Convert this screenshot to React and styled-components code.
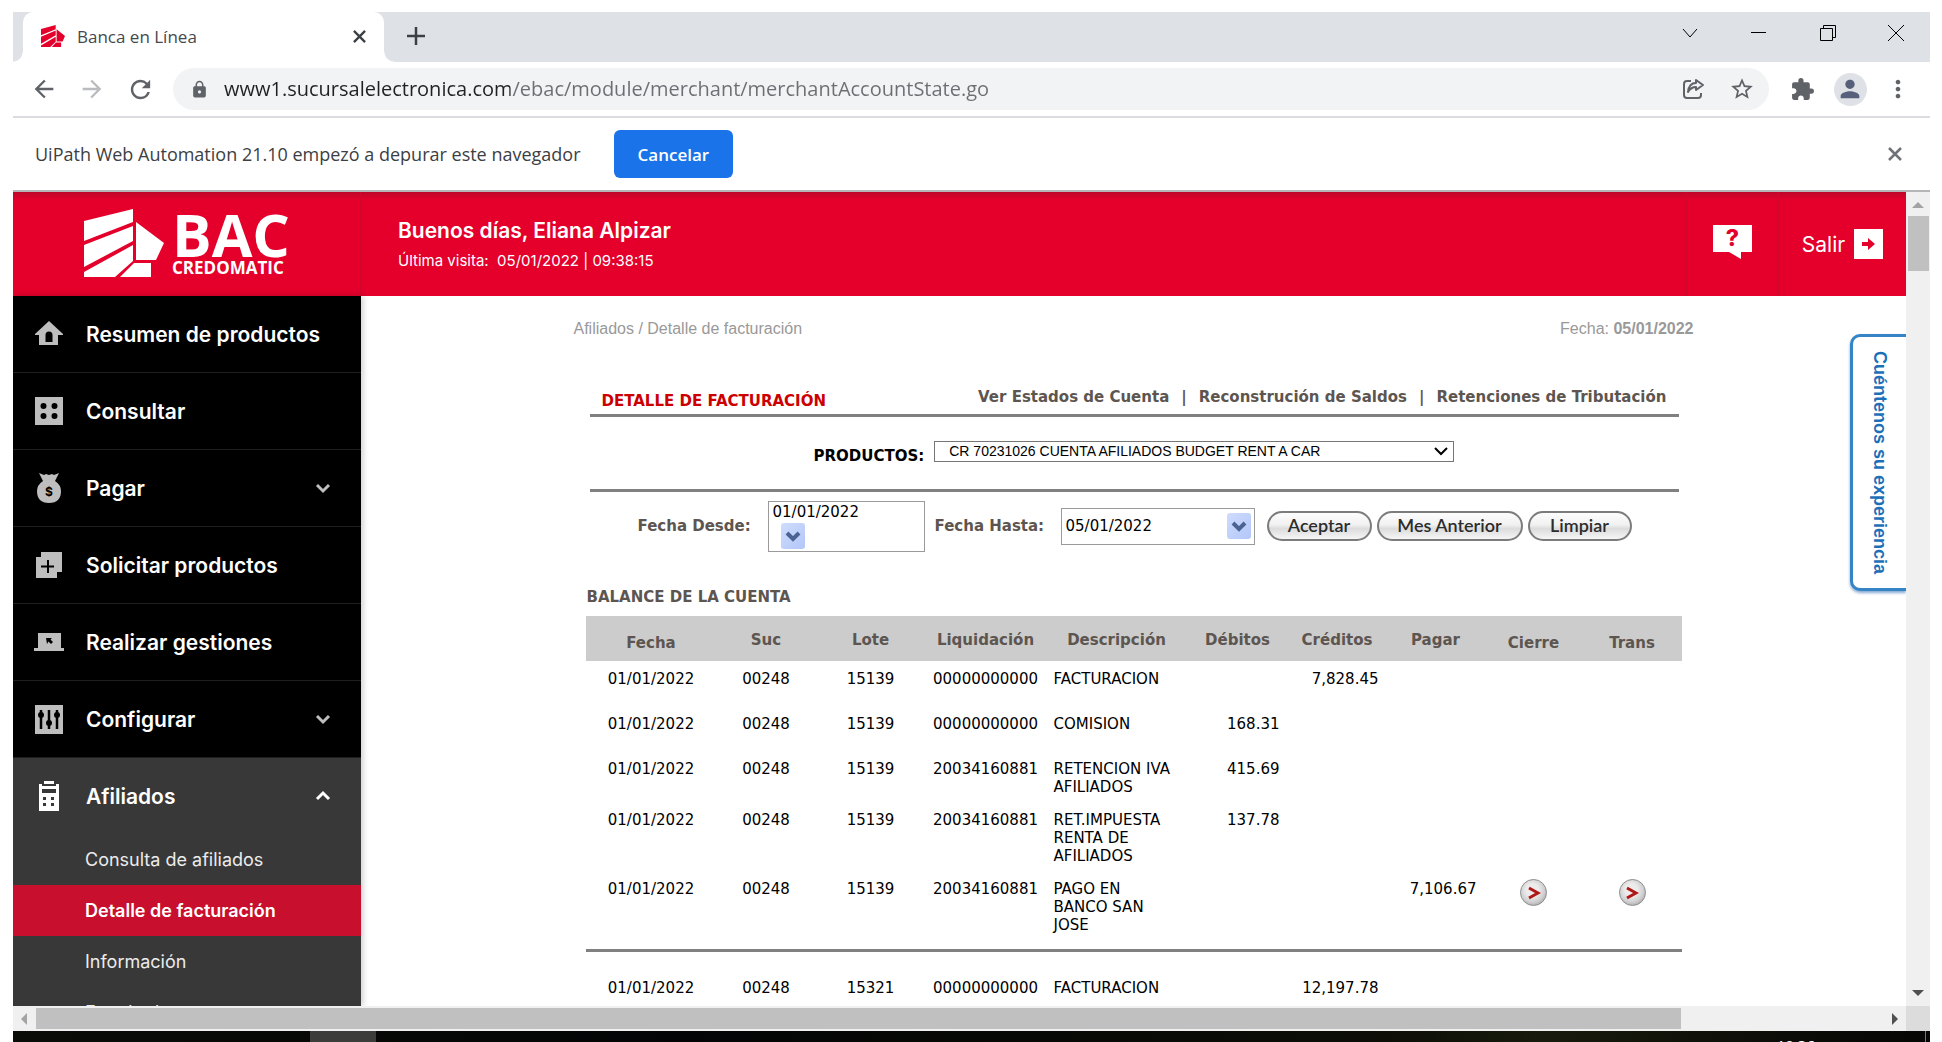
import React from "react";
import styled, { createGlobalStyle, css } from "styled-components";
import {
  MdArrowBack,
  MdArrowForward,
  MdRefresh,
  MdLock,
  MdStarBorder,
  MdExtension,
  MdPerson,
  MdMoreVert,
} from "react-icons/md";

const chromeFont = '"Open Sans", "Noto Sans", sans-serif';
const brandFont = 'Inter, "Open Sans", sans-serif';
const tableFont = '"DejaVu Sans", sans-serif';
const plainFont = '"Liberation Sans", Arial, sans-serif';

const GlobalStyle = createGlobalStyle`
  *, *::before, *::after { box-sizing: border-box; }
  body { margin: 0; background: #fff; }
  button, input, select { font: inherit; color: inherit; margin: 0; }
  button { border: 0; padding: 0; background: none; cursor: pointer; }
  a { color: inherit; text-decoration: none; }
  svg { display: block; flex: none; }
`;

const Screen = styled.div`
  display: flex;
  flex-direction: column;
  height: 100vh;
  padding: 12px 12px 0 13px;
  overflow: hidden;
`;

/* ---------- browser chrome ---------- */

const TabStrip = styled.div`
  display: flex;
  align-items: stretch;
  height: 50px;
  flex: none;
  padding-left: 10px;
  background: #dee1e6;
  font-family: ${chromeFont};
`;

const Tab = styled.div`
  position: relative;
  display: flex;
  align-items: center;
  gap: 12px;
  width: 361px;
  padding: 0 14px 2px 18px;
  border-radius: 10px 10px 0 0;
  background: #fff;
  color: #45494d;
  font-size: 17px;
  &::before,
  &::after {
    content: "";
    position: absolute;
    bottom: 0;
    width: 10px;
    height: 10px;
  }
  &::before {
    right: 100%;
    background: radial-gradient(circle at 0 0, transparent 9px, #fff 10px);
  }
  &::after {
    left: 100%;
    background: radial-gradient(circle at 100% 0, transparent 9px, #fff 10px);
  }
`;

const TabTitle = styled.span`
  flex: 1;
`;

const IconButton = styled.button`
  display: grid;
  place-items: center;
  width: ${(p) => p.$w || 48}px;
  height: ${(p) => p.$h || 42}px;
  flex: none;
  color: ${(p) => p.$color || "#5f6368"};
`;

const WindowControls = styled.div`
  display: flex;
  align-items: center;
  height: 42px;
  margin-left: auto;
  color: #000;
`;

const Toolbar = styled.div`
  display: flex;
  align-items: center;
  height: 56px;
  flex: none;
  padding: 0 8px 0 7px;
  border-bottom: 2px solid #dadcdf;
  font-family: ${chromeFont};
`;

const Omnibox = styled.div`
  display: flex;
  align-items: center;
  flex: 1;
  height: 42px;
  margin: 0 9px 0 9px;
  padding: 0 3px 0 17px;
  border-radius: 21px;
  background: #f1f3f4;
  color: #5f6368;
`;

const UrlInput = styled.input`
  flex: 1;
  min-width: 0;
  margin-left: 15px;
  padding: 0;
  border: 0;
  outline: 0;
  font-size: 20px;
  line-height: 30px;
  color: #6b6f73;
  background: linear-gradient(to right, #202124 286px, #6b6f73 286px);
  background-clip: text;
  -webkit-background-clip: text;
  -webkit-text-fill-color: transparent;
`;

const Avatar = styled.span`
  display: grid;
  place-items: center;
  width: 33px;
  height: 33px;
  border-radius: 50%;
  background: #dee1e6;
  color: #56607a;
`;

const InfoBar = styled.div`
  display: flex;
  align-items: center;
  height: 74px;
  flex: none;
  padding: 0 11px 0 22px;
  border-bottom: 2px solid #b4b6b8;
  color: #3c4043;
  font-family: ${chromeFont};
  font-size: 18px;
`;

const CancelButton = styled.button`
  height: 48px;
  margin-left: 33px;
  margin-right: auto;
  padding: 0 24px;
  border-radius: 6px;
  background: #1a73e8;
  color: #fff;
  font-size: 17px;
  font-weight: 600;
`;

/* ---------- page viewport ---------- */

const Viewport = styled.div`
  display: grid;
  grid-template-columns: 1fr 24px;
  grid-template-rows: 1fr 25px;
  flex: 1;
  min-height: 0;
`;

const Page = styled.div`
  position: relative;
  display: flex;
  flex-direction: column;
  min-height: 0;
  overflow: hidden;
`;

const Scrollbar = styled.div`
  display: flex;
  flex-direction: ${(p) => (p.$vertical ? "column" : "row")};
  align-items: center;
  justify-content: space-between;
  background: #f0f0f0;
  ${(p) => (p.$vertical ? "padding: 10px 0" : "padding: 0 8px")};
`;

const Thumb = styled.div`
  background: #c0c0c0;
  ${(p) =>
    p.$vertical
      ? css`
          width: 21px;
          height: 55px;
          margin: 8px 0 auto 1px;
        `
      : css`
          height: 21px;
          width: calc(88% - 7px);
          margin: 0 auto 0 9px;
        `};
`;

const Arrow = styled.svg`
  width: ${(p) => (p.$wide ? 12 : 6)}px;
  height: ${(p) => (p.$wide ? 6 : 12)}px;
  fill: ${(p) => (p.$dim ? "#a3a3a3" : "#505050")};
`;

const Corner = styled.div`
  background: #dcdcdc;
`;

const Header = styled.header`
  display: flex;
  align-items: stretch;
  height: 104px;
  flex: none;
  background: linear-gradient(rgba(110, 20, 40, 0.35), rgba(110, 20, 40, 0) 8px), #e4002b;
  color: #fff;
  font-family: ${brandFont};
`;

const LogoLink = styled.a`
  display: flex;
  align-items: center;
  gap: 8px;
  width: 348px;
  padding-left: 71px;
  padding-bottom: 2px;
  border-right: 1px solid #d0062c;
`;

const LogoWords = styled.span`
  display: flex;
  flex-direction: column;
  font-family: "Open Sans", sans-serif;
  font-weight: 700;
`;

const LogoBig = styled.span`
  font-size: 59px;
  line-height: 50px;
`;

const LogoSmall = styled.span`
  font-size: 17px;
  line-height: 18px;
`;

const Greeting = styled.div`
  flex: 1;
  padding: 26px 0 0 37px;
`;

const Hello = styled.p`
  margin: 0 0 7px;
  font-size: 21px;
  font-weight: 600;
  line-height: 26px;
`;

const LastVisit = styled.p`
  margin: 0;
  font-size: 15px;
  line-height: 20px;
  white-space: pre;
`;

const HeaderCell = styled.a`
  display: flex;
  align-items: center;
  justify-content: center;
  gap: 9px;
  width: ${(p) => p.$w}px;
  border-left: 1px solid #d0062c;
  font-size: 21px;
`;

const HelpBubble = styled.span`
  position: relative;
  display: grid;
  place-items: center;
  width: 39px;
  height: 27px;
  margin-bottom: 12px;
  background: #fff;
  color: #e4002b;
  font-size: 23px;
  font-weight: 800;
  line-height: 27px;
  &::after {
    content: "";
    position: absolute;
    top: 100%;
    left: 16px;
    border-top: 7px solid #fff;
    border-left: 12px solid transparent;
  }
`;

const ExitBox = styled.span`
  display: grid;
  place-items: center;
  width: 29px;
  height: 30px;
  background: #fff;
  color: #e4002b;
`;

const Body = styled.div`
  display: flex;
  flex: 1;
  min-height: 0;
`;

/* ---------- sidebar ---------- */

const Sidebar = styled.nav`
  width: 348px;
  flex: none;
  overflow: hidden;
  background: #383838;
  box-shadow: 2px 0 6px rgba(0, 0, 0, 0.2);
  font-family: ${brandFont};
`;

const MenuItem = styled.a`
  display: flex;
  align-items: center;
  height: ${(p) => (p.$open ? 76 : 77)}px;
  padding: 0 30px 0 21px;
  border-bottom: ${(p) => (p.$open ? "0" : "1px solid #1f1f1f")};
  background: ${(p) => (p.$open ? "#383838" : "#000")};
  color: ${(p) => (p.$open ? "#fff" : "#bebebe")};
`;

const MenuLabel = styled.span`
  flex: 1;
  margin-left: 22px;
  color: #fff;
  font-size: 21px;
  font-weight: 600;
`;

const SubItem = styled.a`
  display: flex;
  align-items: center;
  height: 51px;
  padding-left: 72px;
  background: ${(p) => (p.$active ? "#c8102e" : "transparent")};
  color: ${(p) => (p.$active ? "#fff" : "#ececec")};
  font-size: 18px;
  font-weight: ${(p) => (p.$active ? 600 : 400)};
`;

/* ---------- main content ---------- */

const Main = styled.main`
  flex: 1;
  min-width: 0;
  overflow: hidden;
`;

const Content = styled.div`
  max-width: 1120px;
  margin: 0 auto;
  font-family: ${tableFont};
  font-size: 15px;
`;

const Crumbs = styled.div`
  display: flex;
  justify-content: space-between;
  padding-top: 23px;
  color: #999;
  font-family: ${plainFont};
  font-size: 16px;
  line-height: 20px;
`;

const Panel = styled.section`
  padding: 0 15px 0 16px;
  color: #5d5550;
`;

const TitleRow = styled.div`
  display: flex;
  justify-content: space-between;
  padding: 48px 12px 3px 12px;
  line-height: 20px;
`;

const Title = styled.h1`
  margin: 4px 0 0;
  color: #c00;
  font-size: 15px;
  font-weight: 700;
`;

const Links = styled.div`
  display: flex;
  gap: 12px;
  font-weight: 700;
`;

const Rule = styled.hr`
  height: 3px;
  margin: 0;
  border: 0;
  background: #808080;
`;

const ProductRow = styled.div`
  display: flex;
  align-items: center;
  height: 72px;
  padding: 0 225px 0 224px;
  gap: 10px;
`;

const ProductLabel = styled.label`
  padding-top: 5px;
  color: #000;
  font-weight: 700;
`;

const ProductSelect = styled.div`
  position: relative;
  flex: 1;
  margin-bottom: 3px;
  select {
    display: block;
    width: 100%;
    height: 21px;
    padding: 0 24px 2px 14px;
    border: 1px solid #767676;
    border-radius: 0;
    background: #fff;
    color: #000;
    font-family: ${plainFont};
    font-size: 14px;
    appearance: none;
  }
  svg {
    position: absolute;
    top: 6px;
    right: 6px;
    pointer-events: none;
  }
`;

const FilterRow = styled.form`
  display: flex;
  align-items: center;
  height: 68px;
  padding-left: 48px;
  font-weight: 700;
`;

const DateLabel = styled.label`
  width: ${(p) => p.$w}px;
`;

const DateBox = styled.span`
  display: flex;
  flex-wrap: ${(p) => (p.$stacked ? "wrap" : "nowrap")};
  align-items: center;
  width: ${(p) => p.$w}px;
  height: ${(p) => (p.$stacked ? 51 : 37)}px;
  margin-right: 10px;
  padding: 0 2px 1px 4px;
  border: 1px solid #9a9a9a;
  background: #fff;
  color: #000;
  font-weight: 400;
  input {
    width: ${(p) => (p.$stacked ? 145 : 161)}px;
    height: 20px;
    padding: 0;
    border: 0;
    background: none;
  }
  button {
    display: grid;
    place-items: center;
    width: 24px;
    height: 26px;
    margin-left: ${(p) => (p.$stacked ? 8 : 0)}px;
    border-radius: 3px;
    background: linear-gradient(135deg, #cfdcfd, #b2c6f8);
  }
`;

const Actions = styled.div`
  display: flex;
  gap: 5px;
  margin-left: 2px;
`;

const PillButton = styled.button`
  height: 30px;
  width: ${(p) => p.$w}px;
  padding-bottom: 2px;
  border: 2px solid #7c7c7c;
  border-radius: 15px;
  background: linear-gradient(#fdfdfd 0%, #f1f1f1 45%, #dcdcdc 60%, #f6f6f6 100%);
  color: #2c2c2c;
  font-family: Lato, "Open Sans", sans-serif;
  font-size: 18px;
  font-weight: 600;
  line-height: 24px;
`;

const Caption = styled.h2`
  margin: 0 -3px 0 -3px;
  padding: 27px 0 9px;
  font-size: 15px;
  line-height: 20px;
`;

const Ledger = styled.table`
  width: calc(100% + 7px);
  margin: 0 -3px 0 -4px;
  border-collapse: collapse;
  table-layout: fixed;
  color: #000;
  line-height: 18px;
  th {
    height: 45px;
    padding: 3px 0 0;
    background: #ccc;
    color: #5d5550;
    font-weight: 700;
  }
  th.low {
    padding-top: 9px;
  }
  td {
    height: 45px;
    padding: 9px 0 6px;
    vertical-align: top;
    text-align: center;
  }
  td.desc {
    padding-left: 8px;
    padding-right: 14px;
    text-align: left;
  }
  td.num {
    padding-right: 8px;
    text-align: right;
  }
  td.go {
    padding-top: 8px;
  }
  td.rule {
    height: 30px;
    padding: 9px 0 18px;
  }
`;

const GoButton = styled.button`
  display: grid;
  place-items: center;
  width: 27px;
  height: 27px;
  margin: 0 auto;
  border: 1px solid #8f8f8f;
  border-radius: 50%;
  background: radial-gradient(circle at 45% 40%, #ececec 30%, #cfcfcf 60%, #858585 100%);
`;

const FeedbackTab = styled.a`
  position: absolute;
  top: 142px;
  right: 0;
  display: flex;
  align-items: center;
  justify-content: center;
  width: 56px;
  height: 257px;
  border: 3px solid #3585c6;
  border-right: 0;
  border-radius: 10px 0 0 10px;
  background: #fff;
  box-shadow: 0 2px 3px rgba(53, 110, 180, 0.6);
  color: #1d70b8;
  font-family: ${plainFont};
  font-size: 18px;
  font-weight: 700;
  line-height: 20px;
  writing-mode: vertical-rl;
`;

/* ---------- desktop strip under the window ---------- */

const Desktop = styled.div`
  display: flex;
  align-items: flex-start;
  height: 11px;
  flex: none;
  overflow: hidden;
  padding-left: 297px;
  background: linear-gradient(to right, #0a0c08 0, #030405 35%, #0b0d06 70%, #171a0c 80%, #050505 100%);
`;

const TaskButton = styled.div`
  width: 66px;
  height: 11px;
  margin-right: auto;
  background: #3c3c3a;
`;

const Clock = styled.time`
  margin-right: 110px;
  padding-top: 4px;
  color: #fff;
  font-family: ${chromeFont};
  font-size: 15px;
  line-height: 20px;
`;

const ShowDesktop = styled.div`
  width: 5px;
  height: 11px;
  border-left: 1px solid #777;
`;

/* ---------- icons ---------- */

const BacMark = ({ w, h }) => (
  <svg width={w} height={h} viewBox="0 0 80 68" fill="currentColor">
    <path d="M0 12 L49 0 V13 L0 32 Z" />
    <path d="M0 36 L49 17 V32 L0 58 Z" />
    <path d="M0 63 L49 36 V52 L31 68 H0 Z" />
    <path d="M52 13 L80 34 L72 51 H52 Z" />
    <path d="M50 54 H67 V68 H36 Z" />
  </svg>
);

const Cross = ({ size }) => (
  <svg width={size} height={size} viewBox="0 0 14 14" fill="none" stroke="currentColor" strokeWidth="2.500">
    <path d="M1 1 L13 13 M13 1 L1 13" />
  </svg>
);

const Plus = () => (
  <svg width="18" height="18" viewBox="0 0 18 18" fill="none" stroke="currentColor" strokeWidth="2.500">
    <path d="M9 0 V18 M0 9 H18" />
  </svg>
);

const Chevron = ({ up, size = 16, width = 3, color = "currentColor" }) => (
  <svg width={size} height={size} viewBox="0 0 16 16" fill="none" stroke={color} strokeWidth={width}>
    <path d={up ? "M2 11 L8 5 L14 11" : "M2 5 L8 11 L14 5"} />
  </svg>
);

const menuIcons = {
  home: (
    <path
      fillRule="evenodd"
      d="M15 2 L29 15 V16 H24 V26 H5 V16 H1 V15 Z M11.500 23 V16 Q11.500 12.500 15 12.500 Q18.500 12.500 18.500 16 V23 Z"
    />
  ),
  dice: (
    <path
      fillRule="evenodd"
      d="M1 1 H29 V29 H1 Z M6.500 10 a3 3 0 1 0 6 0 a3 3 0 1 0 -6 0 M17.500 10 a3 3 0 1 0 6 0 a3 3 0 1 0 -6 0 M6.500 20 a3 3 0 1 0 6 0 a3 3 0 1 0 -6 0 M17.500 20 a3 3 0 1 0 6 0 a3 3 0 1 0 -6 0"
    />
  ),
  bag: (
    <>
      <path d="M5 0 L10 2 L12 1 L15 2 L18 1 L20 2 L25 0 L21 8 Q27 12 27 18 Q27 30 15 30 Q3 30 3 18 Q3 12 9 8 Z" />
      <text x="15" y="23" textAnchor="middle" fontSize="12" fontWeight="700" fontFamily="Inter, sans-serif" fill="#000">
        $
      </text>
    </>
  ),
  plus: (
    <>
      <path d="M7 2 H28 V22 H23 V28 H2 V7 H7 Z" />
      <path d="M14 10 V23 M7 16.500 H20" stroke="#000" strokeWidth="2" />
    </>
  ),
  laptop: (
    <>
      <path d="M4 6 H27 V21 H30 V24 H0 V21 H4 Z" />
      <path d="M12 11 H18 L16.500 12.500 L19 15 L17 17 L14.500 14.500 L13 17 Z" fill="#000" />
    </>
  ),
  sliders: (
    <>
      <path d="M1 1 H29 V30 H1 Z" />
      <path d="M7 6 V25 M15 6 V25 M23 6 V25" stroke="#000" strokeWidth="2.500" />
      <circle cx="7" cy="11" r="3" fill="#000" />
      <circle cx="15" cy="19" r="3" fill="#000" />
      <circle cx="23" cy="11" r="3" fill="#000" />
    </>
  ),
  terminal: (
    <>
      <path d="M10 0 H20 V3 H10 Z M5 3 H8 V5 H22 V3 H25 V30 H5 Z" />
      <path
        d="M8 8 H22 V12 H8 Z M9 16 h3 v3 h-3 z M17 16 h3 v3 h-3 z M9 22 h3 v3 h-3 z M17 22 h3 v3 h-3 z"
        fill="#383838"
      />
    </>
  ),
};

const MenuIcon = ({ name }) => (
  <svg width="30" height="30" viewBox="0 0 30 30" fill="currentColor">
    {menuIcons[name]}
  </svg>
);

/* ---------- data ---------- */

const menu = [
  { icon: "home", label: "Resumen de productos" },
  { icon: "dice", label: "Consultar" },
  { icon: "bag", label: "Pagar", arrow: true },
  { icon: "plus", label: "Solicitar productos" },
  { icon: "laptop", label: "Realizar gestiones" },
  { icon: "sliders", label: "Configurar", arrow: true },
  { icon: "terminal", label: "Afiliados", arrow: true, open: true },
];

const submenu = ["Consulta de afiliados", "Detalle de facturación", "Información", "Estado de cuenta"];

const columns = [
  { label: "Fecha", width: 131, low: true },
  { label: "Suc", width: 99 },
  { label: "Lote", width: 110 },
  { label: "Liquidación", width: 120 },
  { label: "Descripción", width: 142 },
  { label: "Débitos", width: 100 },
  { label: "Créditos", width: 99 },
  { label: "Pagar", width: 98 },
  { label: "Cierre", width: 98, low: true },
  { label: "Trans", width: 99, low: true },
];

const rows = [
  ["01/01/2022", "00248", "15139", "00000000000", "FACTURACION", "", "7,828.45", ""],
  ["01/01/2022", "00248", "15139", "00000000000", "COMISION", "168.31", "", ""],
  ["01/01/2022", "00248", "15139", "20034160881", "RETENCION IVA AFILIADOS", "415.69", "", ""],
  ["01/01/2022", "00248", "15139", "20034160881", "RET.IMPUESTA RENTA DE AFILIADOS", "137.78", "", ""],
  ["01/01/2022", "00248", "15139", "20034160881", "PAGO EN BANCO SAN JOSE", "", "", "7,106.67"],
  null,
  ["01/01/2022", "00248", "15321", "00000000000", "FACTURACION", "", "12,197.78", ""],
];

const cellClass = (i) => (i === 4 ? "desc" : i > 4 ? "num" : undefined);

const Go = ({ label }) => (
  <GoButton type="button" aria-label={label}>
    <svg width="14" height="14" viewBox="0 0 14 14" fill="none" stroke="#b01818" strokeWidth="3">
      <path d="M2 2 L11 7 L2 12" />
    </svg>
  </GoButton>
);

function LedgerRow({ row }) {
  if (!row) {
    return (
      <tr>
        <td className="rule" colSpan={10}>
          <Rule />
        </td>
      </tr>
    );
  }
  return (
    <tr>
      {row.map((value, i) => (
        <td key={i} className={cellClass(i)}>
          {value}
        </td>
      ))}
      <td className="go">{row[7] && <Go label="Cierre" />}</td>
      <td className="go">{row[7] && <Go label="Trans" />}</td>
    </tr>
  );
}

function BrowserChrome() {
  return (
    <>
      <TabStrip>
        <Tab>
          <svg width="24" height="22" viewBox="0 0 80 68" preserveAspectRatio="none" fill="#e4002b">
            <path d="M0 12 L49 0 V13 L0 32 Z M0 36 L49 17 V32 L0 58 Z M0 63 L49 36 V52 L31 68 H0 Z M52 13 L80 34 L72 51 H52 Z M50 54 H67 V68 H36 Z" />
          </svg>
          <TabTitle>Banca en Línea</TabTitle>
          <IconButton $w={22} aria-label="Cerrar pestaña" $color="#3c4043">
            <Cross size={13} />
          </IconButton>
        </Tab>
        <IconButton $w={64} $h={48} $color="#3c4043" aria-label="Nueva pestaña">
          <Plus />
        </IconButton>
        <WindowControls>
          <IconButton $w={68} $color="#000" aria-label="Buscar pestañas">
            <svg width="16" height="16" viewBox="0 0 16 16" fill="none" stroke="#000">
              <path d="M1 4 L8 12 L15 4" />
            </svg>
          </IconButton>
          <IconButton $w={69} $color="#000" aria-label="Minimizar">
            <svg width="16" height="16" viewBox="0 0 16 16">
              <path d="M0 7 H15 V8 H0 Z" />
            </svg>
          </IconButton>
          <IconButton $w={69} $color="#000" aria-label="Restaurar">
            <svg width="16" height="16" viewBox="0 0 16 16" fill="none" stroke="#000">
              <path d="M0.500 3.500 H12.500 V15.500 H0.500 Z M3.500 3.500 V0.500 H15.500 V12.500 H12.500" />
            </svg>
          </IconButton>
          <IconButton $w={68} $color="#000" aria-label="Cerrar">
            <svg width="16" height="16" viewBox="0 0 16 16" fill="none" stroke="#000">
              <path d="M0 0 L16 16 M16 0 L0 16" />
            </svg>
          </IconButton>
        </WindowControls>
      </TabStrip>
      <Toolbar>
        <IconButton aria-label="Atrás">
          <MdArrowBack size={28} />
        </IconButton>
        <IconButton aria-label="Adelante" $color="#b9bbbe">
          <MdArrowForward size={28} />
        </IconButton>
        <IconButton aria-label="Recargar">
          <MdRefresh size={29} />
        </IconButton>
        <Omnibox>
          <MdLock size={19} />
          <UrlInput
            aria-label="Dirección"
            defaultValue="www1.sucursalelectronica.com/ebac/module/merchant/merchantAccountState.go"
          />
          <IconButton aria-label="Compartir">
            <svg width="22" height="22" viewBox="0 0 22 22" fill="none" stroke="#5f6368" strokeWidth="2" strokeLinejoin="round">
              <path d="M8 3 H4 Q1 3 1 6 V17 Q1 20 4 20 H15 Q18 20 18 17 V15" />
              <path d="M13 2 L20 7 L13 12 V9 Q8 9 5 14 Q6 5 13 5 Z" />
            </svg>
          </IconButton>
          <IconButton aria-label="Marcador">
            <MdStarBorder size={26} />
          </IconButton>
        </Omnibox>
        <IconButton aria-label="Extensiones">
          <MdExtension size={25} />
        </IconButton>
        <IconButton aria-label="Perfil">
          <Avatar>
            <MdPerson size={28} />
          </Avatar>
        </IconButton>
        <IconButton aria-label="Menú">
          <MdMoreVert size={28} />
        </IconButton>
      </Toolbar>
      <InfoBar>
        <span>UiPath Web Automation 21.10 empezó a depurar este navegador</span>
        <CancelButton>Cancelar</CancelButton>
        <IconButton aria-label="Cerrar aviso" $color="#6f7377">
          <Cross size={14} />
        </IconButton>
      </InfoBar>
    </>
  );
}

export default function App() {
  return (
    <Screen>
      <GlobalStyle />
      <BrowserChrome />
      <Viewport>
        <Page>
          <Header>
            <LogoLink href="#" aria-label="BAC Credomatic">
              <BacMark w={80} h={68} />
              <LogoWords>
                <LogoBig>BAC</LogoBig>
                <LogoSmall>CREDOMATIC</LogoSmall>
              </LogoWords>
            </LogoLink>
            <Greeting>
              <Hello>Buenos días, Eliana Alpizar</Hello>
              <LastVisit>{"Última visita:  05/01/2022 | 09:38:15"}</LastVisit>
            </Greeting>
            <HeaderCell href="#" $w={92} aria-label="Ayuda">
              <HelpBubble>?</HelpBubble>
            </HeaderCell>
            <HeaderCell href="#" $w={128}>
              Salir
              <ExitBox>
                <svg width="13" height="12" viewBox="0 0 13 12" fill="currentColor">
                  <path d="M0 4 H6 V0 L13 6 L6 12 V8 H0 Z" />
                </svg>
              </ExitBox>
            </HeaderCell>
          </Header>
          <Body>
            <Sidebar>
              {menu.map((m) => (
                <MenuItem key={m.label} href="#" $open={m.open}>
                  <MenuIcon name={m.icon} />
                  <MenuLabel>{m.label}</MenuLabel>
                  {m.arrow && <Chevron up={m.open} />}
                </MenuItem>
              ))}
              {submenu.map((s) => (
                <SubItem key={s} href="#" $active={s === "Detalle de facturación"}>
                  {s}
                </SubItem>
              ))}
            </Sidebar>
            <Main>
              <Content>
                <Crumbs>
                  <span>Afiliados / Detalle de facturación</span>
                  <span>
                    Fecha: <b>05/01/2022</b>
                  </span>
                </Crumbs>
                <Panel>
                  <TitleRow>
                    <Title>DETALLE DE FACTURACIÓN</Title>
                    <Links>
                      <a href="#">Ver Estados de Cuenta</a>
                      <span>|</span>
                      <a href="#">Reconstrución de Saldos</a>
                      <span>|</span>
                      <a href="#">Retenciones de Tributación</a>
                    </Links>
                  </TitleRow>
                  <Rule />
                  <ProductRow>
                    <ProductLabel htmlFor="producto">PRODUCTOS:</ProductLabel>
                    <ProductSelect>
                      <select id="producto">
                        <option>CR 70231026 CUENTA AFILIADOS BUDGET RENT A CAR</option>
                      </select>
                      <svg width="14" height="9" viewBox="0 0 14 9" fill="none" stroke="#000" strokeWidth="2">
                        <path d="M1 1 L7 7 L13 1" />
                      </svg>
                    </ProductSelect>
                  </ProductRow>
                  <Rule />
                  <FilterRow>
                    <DateLabel htmlFor="desde" $w={130}>
                      Fecha Desde:
                    </DateLabel>
                    <DateBox $stacked $w={157}>
                      <input id="desde" defaultValue="01/01/2022" />
                      <button type="button" aria-label="Elegir fecha desde">
                        <Chevron width={4} color="#4b6393" />
                      </button>
                    </DateBox>
                    <DateLabel htmlFor="hasta" $w={126}>
                      Fecha Hasta:
                    </DateLabel>
                    <DateBox $w={194}>
                      <input id="hasta" defaultValue="05/01/2022" />
                      <button type="button" aria-label="Elegir fecha hasta">
                        <Chevron width={4} color="#4b6393" />
                      </button>
                    </DateBox>
                    <Actions>
                      <PillButton type="button" $w={105}>
                        Aceptar
                      </PillButton>
                      <PillButton type="button" $w={146}>
                        Mes Anterior
                      </PillButton>
                      <PillButton type="button" $w={104}>
                        Limpiar
                      </PillButton>
                    </Actions>
                  </FilterRow>
                  <Caption>BALANCE DE LA CUENTA</Caption>
                  <Ledger>
                    <colgroup>
                      {columns.map((c) => (
                        <col key={c.label} width={c.width} />
                      ))}
                    </colgroup>
                    <thead>
                      <tr>
                        {columns.map((c) => (
                          <th key={c.label} className={c.low ? "low" : undefined}>
                            {c.label}
                          </th>
                        ))}
                      </tr>
                    </thead>
                    <tbody>
                      {rows.map((r, i) => (
                        <LedgerRow key={i} row={r} />
                      ))}
                    </tbody>
                  </Ledger>
                </Panel>
              </Content>
            </Main>
          </Body>
          <FeedbackTab href="#">Cuéntenos su experiencia</FeedbackTab>
        </Page>
        <Scrollbar $vertical>
          <Arrow $wide $dim viewBox="0 0 12 6">
            <path d="M0 6 L6 0 L12 6 Z" />
          </Arrow>
          <Thumb $vertical />
          <Arrow $wide viewBox="0 0 12 6">
            <path d="M0 0 H12 L6 6 Z" />
          </Arrow>
        </Scrollbar>
        <Scrollbar>
          <Arrow $dim viewBox="0 0 6 12">
            <path d="M6 0 V12 L0 6 Z" />
          </Arrow>
          <Thumb />
          <Arrow viewBox="0 0 6 12">
            <path d="M0 0 L6 6 L0 12 Z" />
          </Arrow>
        </Scrollbar>
        <Corner />
      </Viewport>
      <Desktop>
        <TaskButton />
        <Clock>10:36</Clock>
        <ShowDesktop />
      </Desktop>
    </Screen>
  );
}
